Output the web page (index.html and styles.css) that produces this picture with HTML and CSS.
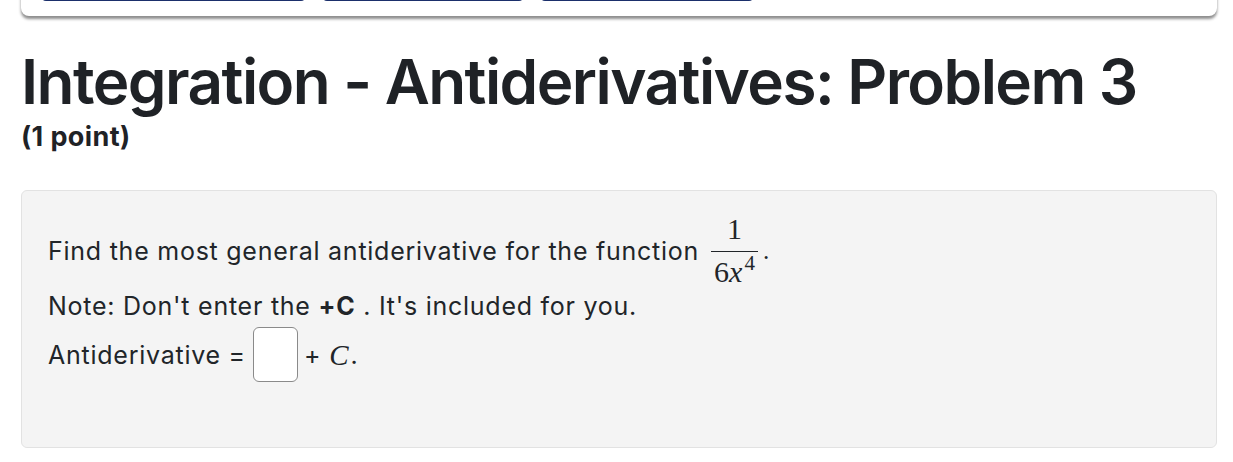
FILE: index.html
```html
<!DOCTYPE html>
<html lang="en">
<head>
<meta charset="utf-8">
<title>Integration - Antiderivatives: Problem 3</title>
<link rel="stylesheet" href="styles.css">
</head>
<body>
<div class="page">
  <div class="navcard">
    <span class="navbtn w1"></span>
    <span class="navbtn w2"></span>
    <span class="navbtn w3"></span>
  </div>
  <h1 class="title">Integration - Antiderivatives: Problem 3</h1>
  <div class="points">(1 point)</div>
  <div class="problem">
    <p class="line first"><span>Find the most general antiderivative for the function</span><span class="frac"><span class="num">1</span><span class="den">6<i class="mi">x</i><sup>4</sup></span></span><span class="dot">.</span></p>
    <p class="line note">Note: Don't enter the <b>+C</b> . It's included for you.</p>
    <p class="line answer"><span>Antiderivative =</span><span class="ansbox"></span><span class="plus">+</span><i class="mi c">C</i><span class="cdot">.</span></p>
  </div>
</div>
</body>
</html>
```

FILE: styles.css
```css
html, body {
  margin: 0;
  background: #ffffff;
}
body {
  font-family: Inter, "Noto Sans", sans-serif;
  color: #212529;
}
.page {
  padding: 0 16px 0 21px;
}
.navcard {
  margin-top: -40px;
  height: 56px;
  background: #fff;
  border-radius: 8px;
  box-shadow: 0 3px 3px rgba(0, 0, 0, 0.45);
  display: flex;
  gap: 18px;
  padding: 0 21px;
  box-sizing: border-box;
}
.navbtn {
  display: block;
  height: 41px;
  background: #2f5fc4;
  border-bottom: 2px solid #1b2f6b;
  border-radius: 0 0 4px 4px;
  box-sizing: border-box;
}
.w1 { width: 263px; }
.w2 { width: 200px; }
.w3 { width: 212px; }
.title {
  margin: 28px 0 0 0;
  font-size: 62px;
  font-weight: 600;
  line-height: 76px;
  letter-spacing: -1.55px;
  color: #1f2226;
}
.points {
  font-size: 27px;
  font-weight: 700;
  line-height: 34px;
  letter-spacing: 0.4px;
  margin-top: 0;
  color: #1f2226;
}
.problem {
  margin-top: 36px;
  background: #f4f4f4;
  border: 1px solid #e2e2e2;
  border-radius: 6px;
  height: 258px;
  box-sizing: border-box;
  padding: 23px 26px 0;
}
.line {
  margin: 0;
  font-size: 25px;
  line-height: 30px;
  letter-spacing: 0.75px;
}
.first {
  display: flex;
  align-items: center;
}
.frac {
  display: inline-flex;
  flex-direction: column;
  align-items: center;
  margin-left: 12px;
  font-family: "Liberation Serif", "DejaVu Serif", serif;
  font-size: 30px;
  line-height: 30px;
  letter-spacing: 0;
}
.num {
  padding: 0 4px 7px;
}
.den {
  border-top: 1.5px solid #212529;
  padding: 5px 3px 0;
}
.den sup {
  font-size: 21px;
  vertical-align: 12px;
  line-height: 0;
  margin-left: 2px;
}
.mi {
  font-family: "Liberation Serif", "DejaVu Serif", serif;
  font-style: italic;
  letter-spacing: 0;
}
.dot {
  margin-left: 5px;
  font-family: "Liberation Serif", serif;
}
.note {
  margin-top: 4px;
}
.answer {
  margin-top: 6px;
  display: flex;
  align-items: center;
}
.ansbox {
  display: inline-block;
  width: 45px;
  height: 55px;
  margin-left: 7px;
  background: #fff;
  border: 1.5px solid #8a8a8a;
  border-radius: 6px;
  box-sizing: border-box;
}
.plus {
  margin-left: 6px;
}
.c {
  font-size: 29px;
  margin-left: 8px;
}
.cdot {
  margin-left: 2px;
}
```
